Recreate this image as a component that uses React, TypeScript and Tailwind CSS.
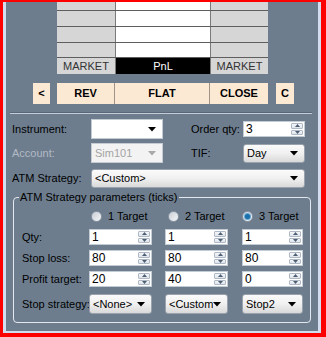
import React from "react";

function Arrow({ color = "#000" }: { color?: string }) {
  return (
    <svg width="8" height="5" viewBox="0 0 8 5" className="shrink-0">
      <path d="M0 0 L8 0 L4 4.5 Z" fill={color} />
    </svg>
  );
}

function SpinBtns() {
  return (
    <div className="flex flex-col gap-[1px] my-[1px] mr-[1px] w-[12px] shrink-0">
      <div className="flex-1 flex items-center justify-center bg-gradient-to-b from-[#f4f6f9] to-[#dfe5ec] border border-[#aeb9c5] rounded-[1px]">
        <svg width="5" height="3" viewBox="0 0 5 3"><path d="M0 3 L2.5 0 L5 3 Z" fill="#4e5f73" /></svg>
      </div>
      <div className="flex-1 flex items-center justify-center bg-gradient-to-b from-[#f4f6f9] to-[#dfe5ec] border border-[#aeb9c5] rounded-[1px]">
        <svg width="5" height="3" viewBox="0 0 5 3"><path d="M0 0 L2.5 3 L5 0 Z" fill="#4e5f73" /></svg>
      </div>
    </div>
  );
}

function Spin({ value, className }: { value: string; className: string }) {
  return (
    <div className={"flex h-[16px] bg-white border border-[#c3cbd4] shrink-0 " + className}>
      <div className="flex-1 pl-[2px] leading-[14px] text-[12px]">{value}</div>
      <SpinBtns />
    </div>
  );
}

function Combo({ value, className }: { value: string; className: string }) {
  return (
    <div
      className={
        "flex items-center h-[19px] rounded-[3px] border border-[#9aa3ad] bg-gradient-to-b from-[#fbfbfb] via-[#f0f0f0] to-[#d9d9d9] pl-[3px] pr-[6px] shrink-0 " +
        className
      }
    >
      <div className="flex-1 whitespace-nowrap overflow-hidden text-[11px]">{value}</div>
      <Arrow />
    </div>
  );
}

function Radio({ checked, label }: { checked?: boolean; label: string }) {
  return (
    <div className="flex items-center gap-[6px] whitespace-nowrap">
      <div className="w-[11px] h-[11px] rounded-full border border-[#8d99a6] bg-gradient-to-br from-[#c9cfd6] to-[#f5f6f8] flex items-center justify-center">
        {checked && <div className="w-[5px] h-[5px] rounded-full bg-[#1a6fa8] ring-1 ring-[#63a9d8]" />}
      </div>
      <span className="text-[11px]">{label}</span>
    </div>
  );
}

export default function App() {
  const gray = "bg-[#d6d6d6]";
  const line = "border-b border-[#5e5e5e]";
  return (
    <div className="w-[326px] h-[337px] bg-[#ff0000] pl-[3px] pt-[2px] pr-[5px] pb-[4px] font-['Liberation_Sans',Arial,sans-serif] text-[11px] text-black">
      <div className="h-full bg-[#6d7d8e] border-l-[3px] border-r-[3px] border-b-[2px] border-[#d3ddef] flex flex-col">
        {/* table */}
        <div className="ml-[51px] w-[211px] flex flex-col">
          {[8, 15, 15, 14].map((h, i) => (
            <div key={i} className={"flex " + line} style={{ height: h + 1 }}>
              <div className={"w-[58px] " + gray} />
              <div className="w-[95px] bg-white border-l border-[#7a7a7a]" />
              <div className={"w-[58px] border-l border-[#7a7a7a] " + gray} />
            </div>
          ))}
          <div className="flex h-[16px]">
            <div className={"w-[58px] flex items-center justify-center text-[#333] " + gray}>MARKET</div>
            <div className="w-[95px] bg-black text-white flex items-center justify-center border-l border-[#7a7a7a]">PnL</div>
            <div className={"w-[58px] flex items-center justify-center text-[#333] border-l border-[#7a7a7a] " + gray}>MARKET</div>
          </div>
        </div>

        {/* buttons */}
        <div className="flex mt-[9px] h-[21px] font-bold text-[11px]">
          <div className="ml-[27px] w-[17px] bg-[#fce9d4] flex items-center justify-center">&lt;</div>
          <div className="ml-[7px] w-[58px] bg-[#fce9d4] flex items-center justify-center border-r border-[#a09488]">REV</div>
          <div className="w-[95px] bg-[#fce9d4] flex items-center justify-center border-r border-[#a09488]">FLAT</div>
          <div className="w-[58px] bg-[#fce9d4] flex items-center justify-center">CLOSE</div>
          <div className="ml-[8px] w-[18px] bg-[#fce9d4] flex items-center justify-center">C</div>
        </div>

        {/* separator */}
        <div className="ml-[4px] w-[302px] mt-[8px] h-[2px] border-t border-[#58677a] border-b border-b-[#c4ccd6]" />

        {/* row 1 */}
        <div className="flex items-center mt-[5px] h-[20px] text-[11px] whitespace-nowrap">
          <div className="pl-[6px] w-[85px]">Instrument:</div>
          <div className="w-[72px] h-[20px] bg-white border border-[#c3cbd4] flex items-center justify-end pr-[6px]">
            <Arrow />
          </div>
          <div className="ml-[28px] w-[52px]">Order qty:</div>
          <Spin value="3" className="w-[62px]" />
        </div>

        {/* row 2 */}
        <div className="flex items-center mt-[4px] h-[20px] text-[11px] whitespace-nowrap">
          <div className="pl-[6px] w-[85px] text-[#b2bac4]">Account:</div>
          <div className="w-[72px] h-[20px] bg-[#f3f3f3] border border-[#c7ccd2] flex items-center pl-[3px] pr-[6px] text-[#a3a3a3]">
            <div className="flex-1">Sim101</div>
            <Arrow color="#a8a8a8" />
          </div>
          <div className="ml-[28px] w-[52px]">TIF:</div>
          <Combo value="Day" className="w-[62px]" />
        </div>

        {/* row 3 */}
        <div className="flex items-center mt-[6px] h-[19px] text-[11px] whitespace-nowrap">
          <div className="pl-[6px] w-[85px]">ATM Strategy:</div>
          <Combo value="<Custom>" className="w-[214px]" />
        </div>

        {/* group box */}
        <div className="relative ml-[7px] w-[298px] mt-[9px] h-[126px] border border-[#e3e8ee] rounded-[4px] text-[11px] whitespace-nowrap">
          <div className="absolute left-[5px] top-[-8px] px-[1px] bg-[#6d7d8e] leading-[14px]">ATM Strategy parameters (ticks)</div>
          <div className="flex flex-col pt-[12px]">
            <div className="flex items-center h-[12px]">
              <div className="w-[77px]" />
              <div className="w-[77px]"><Radio label="1 Target" /></div>
              <div className="w-[74px]"><Radio label="2 Target" /></div>
              <div><Radio checked label="3 Target" /></div>
            </div>
            {[
              ["Qty:", "1", "1", "1"],
              ["Stop loss:", "80", "80", "80"],
              ["Profit target:", "20", "40", "0"],
            ].map((r, i) => (
              <div key={i} className={"flex items-center h-[16px] " + (i === 0 ? "mt-[7px]" : "mt-[5px]")}>
                <div className="pl-[8px] w-[75px]">{r[0]}</div>
                <Spin value={r[1]} className="w-[63px]" />
                <Spin value={r[2]} className="ml-[13px] w-[63px]" />
                <Spin value={r[3]} className="ml-[14px] w-[61px]" />
              </div>
            ))}
            <div className="flex items-center h-[20px] mt-[7px]">
              <div className="pl-[8px] w-[75px] whitespace-nowrap">Stop strategy:</div>
              <Combo value="<None>" className="w-[63px] h-[20px]" />
              <Combo value="<Custom>" className="ml-[13px] w-[63px] h-[20px]" />
              <Combo value="Stop2" className="ml-[14px] w-[61px] h-[20px]" />
            </div>
          </div>
        </div>
      </div>
    </div>
  );
}
